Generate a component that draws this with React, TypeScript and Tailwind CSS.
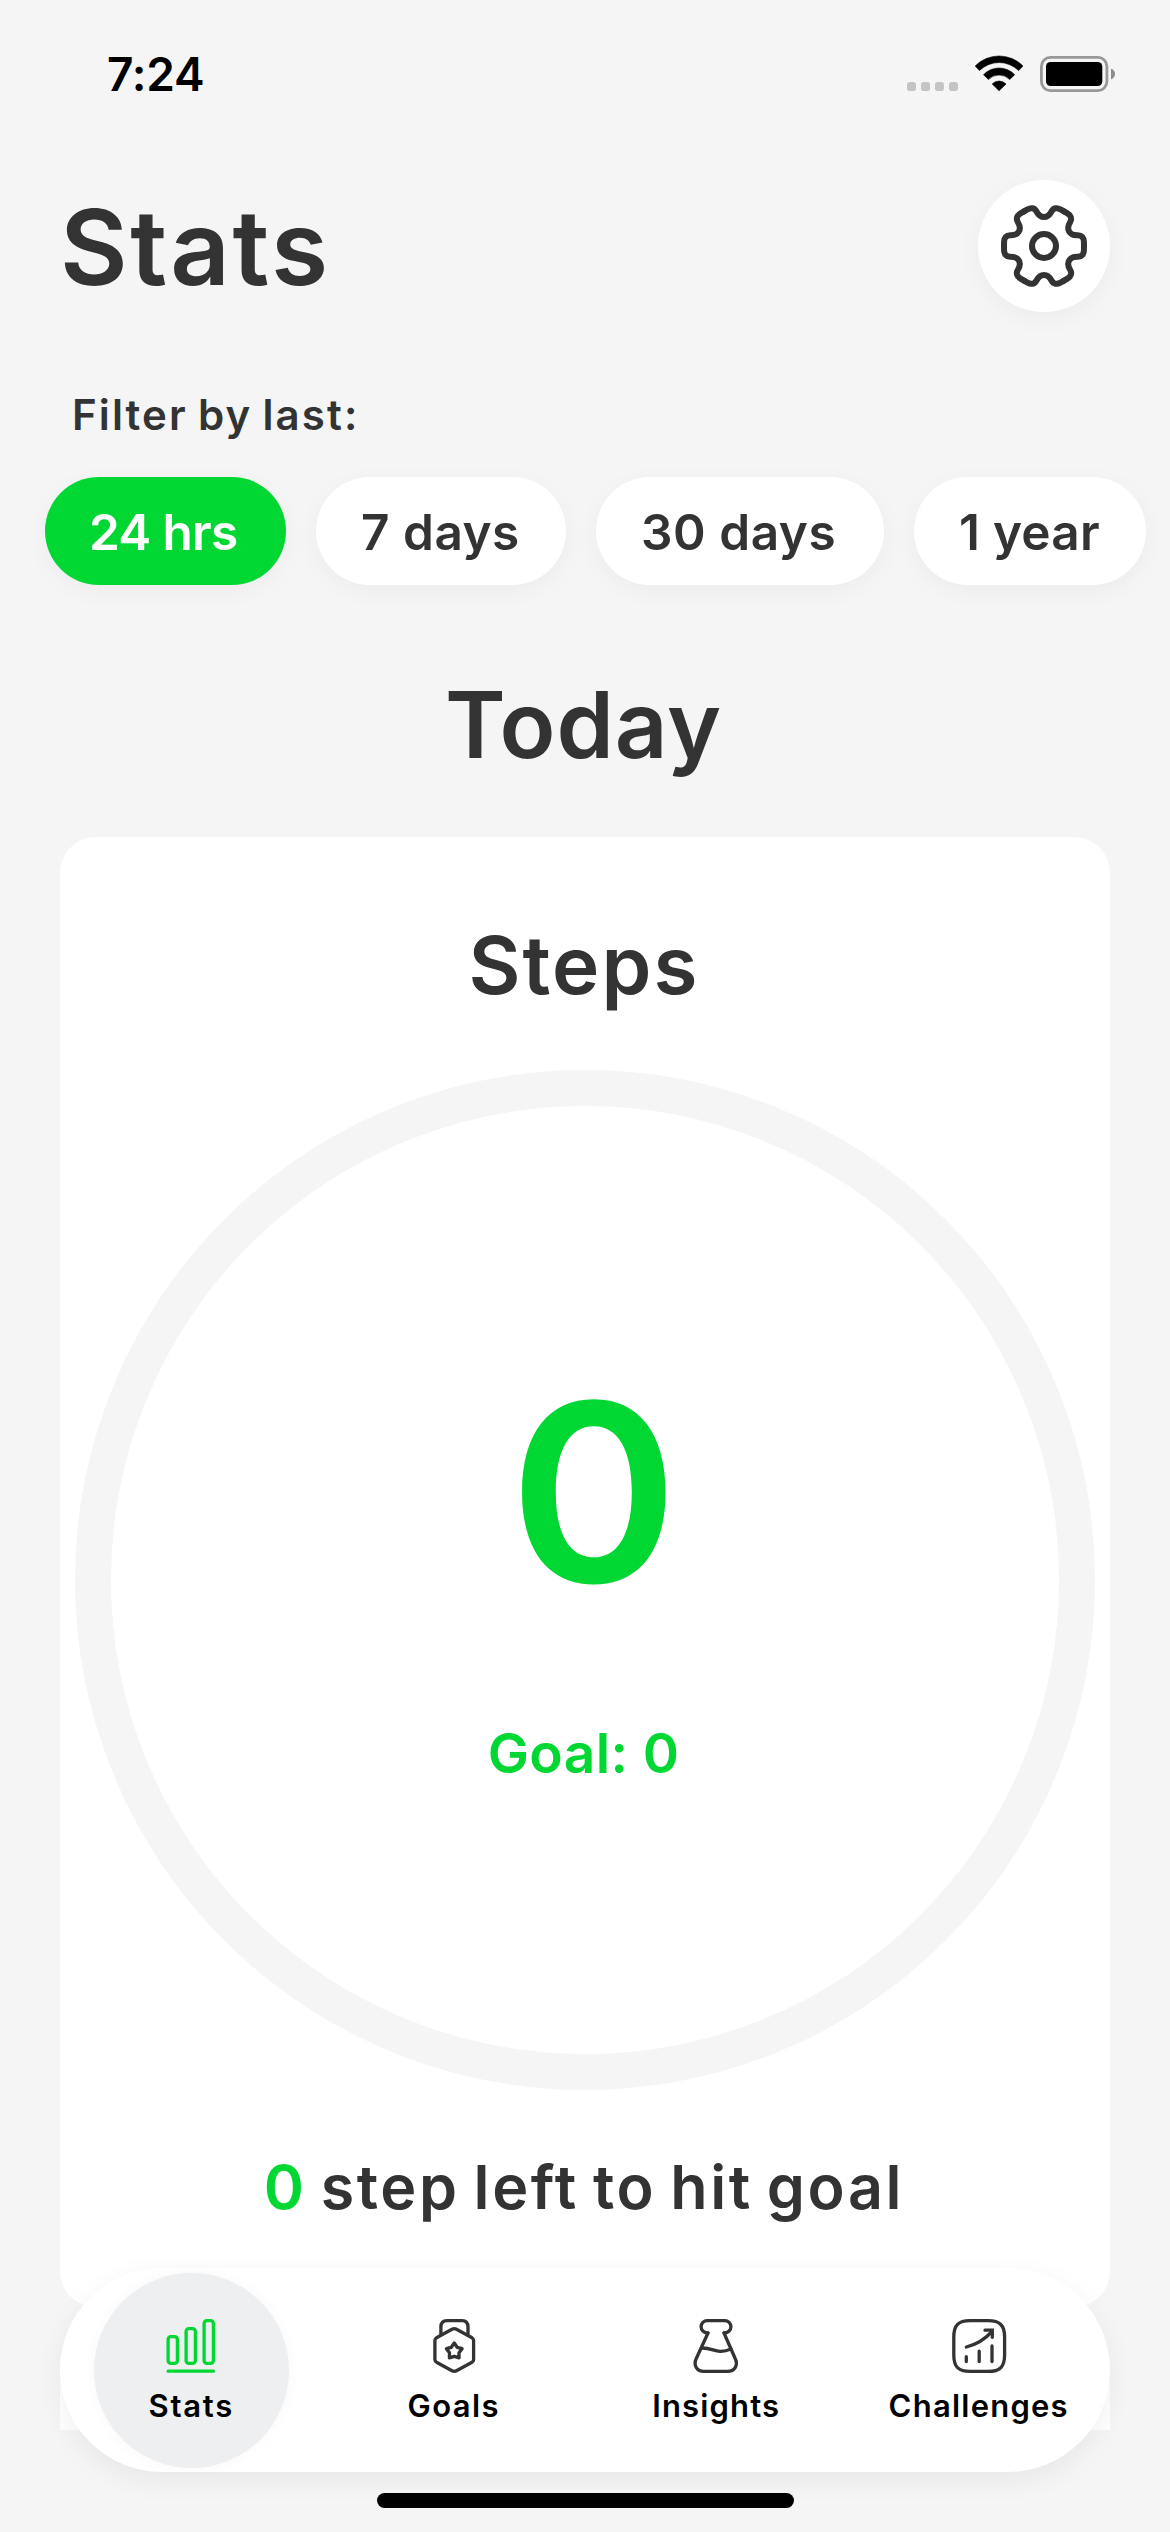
import React from 'react';

function StatusIcons() {
  return (
    <svg width="212" height="40" viewBox="0 0 212 40" fill="#000">
      {[2, 16, 30, 44].map((x) => (
        <rect key={x} x={x} y="28" width="9" height="9" rx="2.8" fill="#c4c4c4" />
      ))}
      <g stroke="#000" strokeWidth="0.6" strokeLinejoin="round">
        <path d="M70.2 12 A33.5 33.5 0 0 1 118 12 L113.7 16.6 A28 28 0 0 0 74.4 16.6Z" />
        <path d="M78.5 20.7 A21.5 21.5 0 0 1 109.7 20.7 L104.7 25.5 A15 15 0 0 0 83.4 25.5Z" />
        <path d="M87.2 30 A9.5 9.5 0 0 1 101 30 L94.1 36.8Z" />
      </g>
      <rect x="136.4" y="3.4" width="65.5" height="33.2" rx="9" fill="none" stroke="#989898" strokeWidth="2.8" />
      <rect x="141" y="8" width="56.3" height="24" rx="4.5" />
      <path d="M206 14.7 C208.6 15.6 210 17.5 210 20 C210 22.5 208.6 24.4 206 25.3Z" fill="#8c8c8c" />
    </svg>
  );
}

function GearIcon() {
  return (
    <svg width="90" height="90" viewBox="-45 -45 90 90" fill="none" stroke="#333" strokeWidth="6" strokeLinecap="round" strokeLinejoin="round">
      {[0, 60, 120, 180, 240, 300].map((a) => (
        <path
          key={a}
          transform={`rotate(${a})`}
          d="M-20 -34.6 L-16.5 -36.6 C-13 -38.6 -9.5 -38.2 -7.5 -34.5 C-5.8 -31.3 -4 -29 0 -29 C4 -29 5.8 -31.3 7.5 -34.5 C9.5 -38.2 13 -38.6 16.5 -36.6 L20 -34.6"
        />
      ))}
      <circle r="12" />
    </svg>
  );
}

function TabIcon({ color, children }: { color: string; children: React.ReactNode }) {
  return (
    <svg width="60" height="60" viewBox="0 0 60 60" fill="none" stroke={color} strokeWidth="3.3" strokeLinecap="round" strokeLinejoin="round">
      {children}
    </svg>
  );
}

const tabs = [
  {
    label: 'Stats',
    color: '#00d732',
    spacing: 'tracking-[1.7px]',
    icon: (
      <>
        <rect x="7.1" y="20.7" width="9.3" height="26.7" rx="2.8" />
        <rect x="25.1" y="12.7" width="9.3" height="34.7" rx="2.8" />
        <rect x="43.1" y="4.7" width="9.3" height="42.7" rx="2.8" />
        <path d="M7.2 55.2H52.3" />
      </>
    ),
  },
  {
    label: 'Goals',
    color: '#333',
    spacing: 'tracking-[1.4px]',
    icon: (
      <>
        <path d="M16.9 18.5V11Q16.9 4.6 23 4.6H38Q44 4.6 44 11V18.5" />
        <path d="M28 13.3Q30.25 12 32.5 13.3L48 21.8Q49.6 22.8 49.6 24.6V43.4Q49.6 45.2 48 46.2L32.5 54.8Q30.25 56 28 54.8L12.5 46.2Q10.9 45.2 10.9 43.4V24.6Q10.9 22.8 12.5 21.8Z" />
        <path d="M30.25 27L33.2 31.3L38.1 32.7L35 36.8L35.1 41.8L30.25 40.3L25.4 41.8L25.5 36.8L22.4 32.7L27.3 31.3Z" />
      </>
    ),
  },
  {
    label: 'Insights',
    color: '#333',
    spacing: 'tracking-[1.15px]',
    icon: (
      <>
        <path d="M22 16.8H21.2A5.9 5.9 0 0 1 21.2 4.6H38.8A5.9 5.9 0 0 1 38.8 16.8H38" />
        <path d="M22 17L10.3 42.5C7 49.5 11 55.4 18 55.4H41.5C48.5 55.4 52.5 49.5 49.2 42.5L38 17" />
        <path d="M15.6 32C24 31.7 28 35 34 35.3C38.5 35.5 41.5 34.5 45 33" />
      </>
    ),
  },
  {
    label: 'Challenges',
    color: '#333',
    spacing: 'tracking-[1.24px]',
    icon: (
      <>
        <path d="M21 4.7H39C51 4.7 55.6 9.3 55.6 21V39C55.6 51 51 55.4 39 55.4H21C9.3 55.4 4.8 51 4.8 39V21C4.8 9.3 9.3 4.7 21 4.7Z" />
        <path d="M17.3 40.7V45.5M30.2 35.2V45.5M43 30V45.5" />
        <path d="M17.3 31Q33 27 43 15.4" />
        <path d="M36 14.2H43.3V21.3" strokeLinejoin="miter" />
      </>
    ),
  },
];

const filters = [
  { label: '24 hrs', style: 'w-[241px] pl-[44px] bg-[#00d732] text-white tracking-[-0.7px]' },
  { label: '7 days', style: 'w-[250px] pl-[45px] bg-white text-[#333] tracking-[0.5px]' },
  { label: '30 days', style: 'w-[288px] pl-[45px] bg-white text-[#333] tracking-[0.55px]' },
  { label: '1 year', style: 'w-[232px] pl-[45px] bg-white text-[#333] tracking-[0.25px]' },
];

export default function App() {
  return (
    <div className="relative h-[2532px] w-[1170px] overflow-hidden bg-[#f5f5f5] font-['Inter',sans-serif] font-semibold text-[#333]">
      <div className="flex h-[2430px] flex-col overflow-hidden">
        <div className="flex h-[148px] shrink-0 items-center justify-between pr-[53px] pl-[107px]">
          <span className="text-[46px] leading-none tracking-[-0.2px] text-black">7:24</span>
          <StatusIcons />
        </div>

        <header className="mt-8 flex h-[132px] shrink-0 items-center justify-between px-[60px]">
          <h1 className="pt-[2px] text-[104px] leading-none tracking-[2.64px]">Stats</h1>
          <button className="flex size-[132px] items-center justify-center rounded-full bg-white shadow-[0_6px_24px_rgba(0,0,0,0.04)]">
            <GearIcon />
          </button>
        </header>

        <p className="mt-[78px] h-[50px] shrink-0 pl-[72px] text-[42px] leading-[50px] tracking-[2.1px] [word-spacing:-2.5px]">Filter by last:</p>

        <div className="mt-[37px] flex shrink-0 gap-[30px] pl-[45px]">
          {filters.map((f) => (
            <button
              key={f.label}
              className={`flex h-[108px] shrink-0 items-center rounded-full pt-[3px] text-[49.5px] leading-none whitespace-nowrap shadow-[0_6px_24px_rgba(0,0,0,0.04)] ${f.style}`}
            >
              {f.label}
            </button>
          ))}
        </div>

        <h2 className="mt-[90px] h-[100px] shrink-0 pr-[3px] text-center text-[92px] leading-[100px] tracking-[0.95px]">Today</h2>

        <section className="mx-[60px] mt-[62px] flex h-[1470px] shrink-0 flex-col items-center rounded-[36px] bg-white pt-[83px]">
          <h3 className="h-[90px] pr-[2px] text-[80px] leading-[90px] tracking-[2.07px]">Steps</h3>
          <div className="mt-[60px] flex size-[1020px] shrink-0 flex-col items-center rounded-full border-[36px] border-[#f5f5f5] pt-[261px] text-[#00d732]">
            <span className="ml-[17px] h-[250px] scale-x-[1.035] text-[248px] leading-[250px]">0</span>
            <span className="mt-[106px] h-[60px] pr-[3px] text-[55px] leading-[60px] tracking-[0.4px]">Goal: 0</span>
          </div>
          <p className="mt-[62px] h-[70px] pr-[2px] text-[61px] leading-[70px] tracking-[2.6px] whitespace-nowrap [word-spacing:-4px]">
            <span className="text-[#00d732]">0</span> step left to hit goal
          </p>
        </section>

        <section className="mx-[60px] mt-[45px] h-[300px] shrink-0 rounded-[36px] bg-white" />
      </div>

      <nav className="absolute top-[2268px] left-[60px] grid h-[204px] w-[1050px] grid-cols-4 rounded-full bg-white shadow-[0_8px_28px_rgba(0,0,0,0.06)]">
        {tabs.map((t, i) => (
          <div key={t.label} className="flex items-center justify-center">
            <div
              className={`flex size-[195px] flex-col items-center rounded-full pt-[43px] ${
                i === 0 ? 'bg-[#edeff1] shadow-[0_0_15px_rgba(0,0,0,0.03)]' : ''
              }`}
            >
              <TabIcon color={t.color}>{t.icon}</TabIcon>
              <span className={`mt-[10px] h-10 text-[31px] leading-10 text-black ${t.spacing}`}>{t.label}</span>
            </div>
          </div>
        ))}
      </nav>

      <div className="absolute top-[2493px] left-[377px] h-[15px] w-[417px] rounded-full bg-black" />
    </div>
  );
}
